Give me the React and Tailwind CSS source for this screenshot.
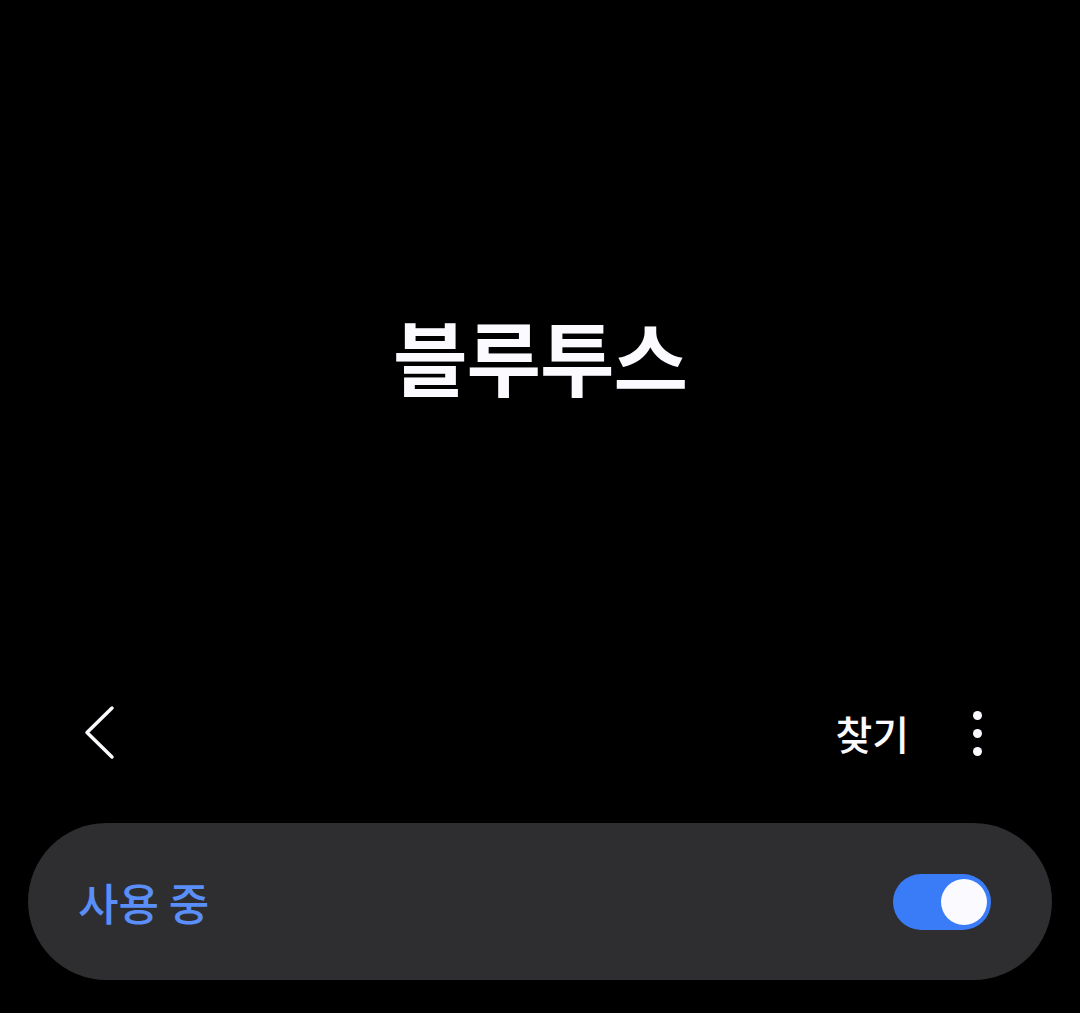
export default function App() {
  const font = { fontFamily: '"Noto Sans CJK KR", "Noto Sans", sans-serif' };
  return (
    <div className="w-[1080px] h-[1013px] bg-black overflow-hidden" style={font}>
      <div className="h-[693px] pt-[16px] flex items-center justify-center">
        <h1 className="text-[81px] font-bold text-[#fafaff] leading-none tracking-[-1px]">블루투스</h1>
      </div>
      <div className="h-[80px] flex items-center pl-[84px] pr-[98px]">
        <svg width="32" height="56" viewBox="0 0 32 56" fill="none" stroke="#fafaff" strokeWidth="3.5" strokeLinecap="round" strokeLinejoin="round">
          <path d="M28 3 L3 27.5 L28 52" />
        </svg>
        <div className="flex-1" />
        <span className="text-[40px] font-medium text-[#fafaff] leading-none">찾기</span>
        <div className="ml-[64px] flex flex-col items-center gap-[9px]">
          <span className="w-[9px] h-[9px] rounded-full bg-[#fafaff]" />
          <span className="w-[9px] h-[9px] rounded-full bg-[#fafaff]" />
          <span className="w-[9px] h-[9px] rounded-full bg-[#fafaff]" />
        </div>
      </div>
      <div className="mt-[50px] mx-[28px] h-[157px] rounded-full bg-[#2e2e30] flex items-center pl-[50px] pr-[61px]">
        <span className="text-[44px] font-medium text-[#5a8ef8] leading-none">사용 중</span>
        <div className="flex-1" />
        <div className="w-[98px] h-[56px] rounded-full bg-[#3a7cf7] flex items-center justify-end pr-[4px]">
          <div className="w-[46px] h-[46px] rounded-full bg-[#fafaff]" />
        </div>
      </div>
    </div>
  );
}
